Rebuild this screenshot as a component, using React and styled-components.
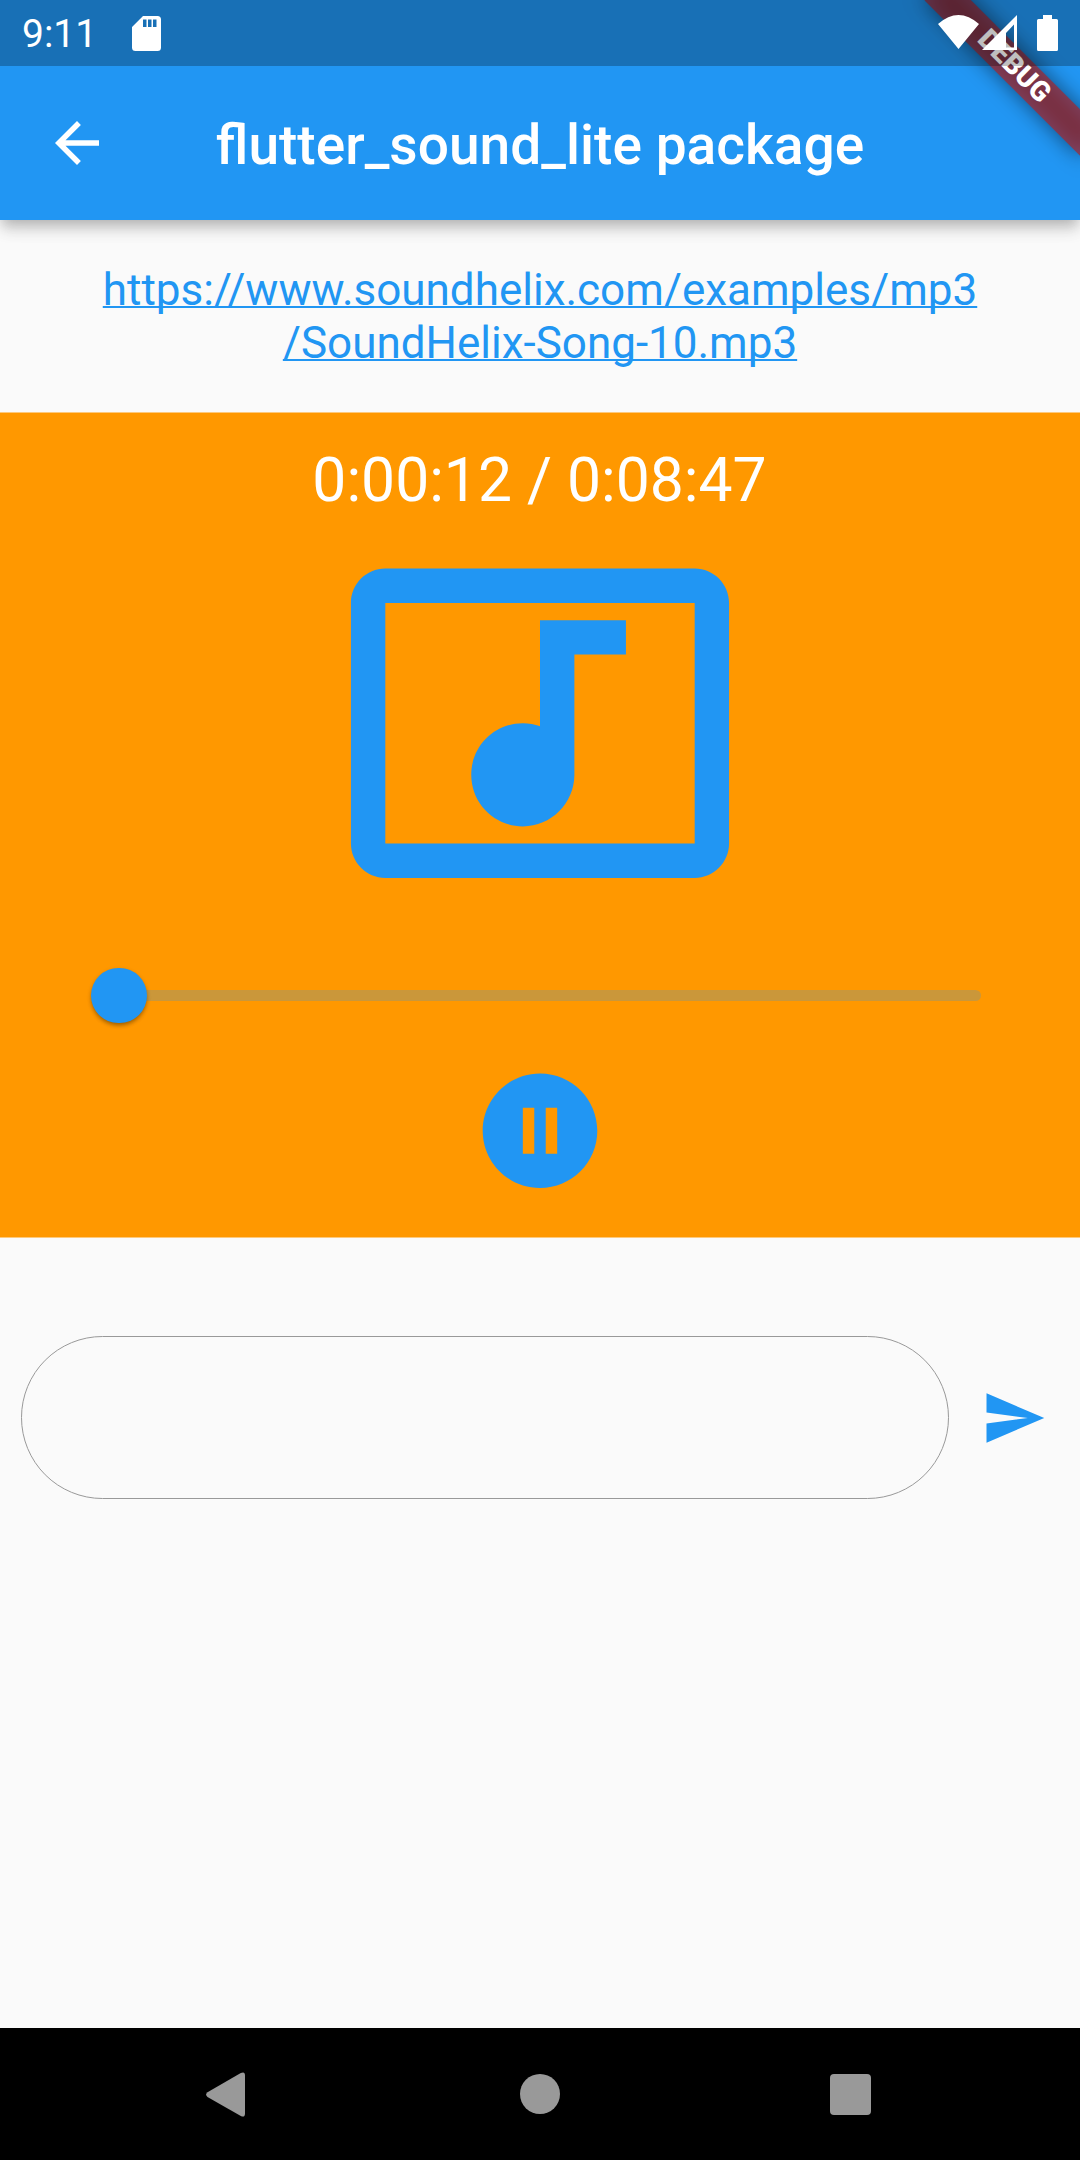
import React from "react";
import styled, { createGlobalStyle } from "styled-components";

const BLUE = "#2196f3";
const ORANGE = "#ff9800";

const GlobalStyle = createGlobalStyle`
  *, *::before, *::after { box-sizing: border-box; }
  html, body { margin: 0; padding: 0; background: #fafafa; }
  body { font-family: Roboto, "Noto Sans", sans-serif; -webkit-font-smoothing: antialiased; }
  button, input { font: inherit; border: 0; padding: 0; margin: 0; background: none; }
  svg { display: block; }
`;

const Screen = styled.div`
  position: relative;
  width: 1080px;
  height: 2160px;
  display: flex;
  flex-direction: column;
  overflow: hidden;
  background: #fafafa;
`;

const TopBar = styled.header`
  position: relative;
  z-index: 1;
  flex: none;
  height: 220px;
  padding-top: 66px;
  background: ${BLUE};
  box-shadow: 0 5.5px 11px -2.75px rgba(0, 0, 0, 0.15), 0 11px 13.75px -1px rgba(0, 0, 0, 0.13),
    0 2.75px 24px 0 rgba(0, 0, 0, 0.07);
`;

const Toolbar = styled.div`
  height: 154px;
  display: grid;
  grid-template-columns: 154px 1fr 154px;
  align-items: center;
  color: #fff;
`;

const IconButton = styled.button`
  display: flex;
  align-items: center;
  justify-content: center;
  color: ${(p) => p.$color};
`;

const Title = styled.h1`
  margin: 0;
  padding-top: 3px;
  text-align: center;
  font-size: 55.1px;
  line-height: 64px;
  font-weight: 500;
  white-space: nowrap;
`;

const LinkSection = styled.section`
  flex: none;
  height: 192px;
  padding: 44px 0;
  text-align: center;
`;

const TrackLink = styled.a`
  display: block;
  color: ${BLUE};
  font-size: 44px;
  line-height: 53px;
  text-decoration: underline;
  text-decoration-thickness: 2px;
  text-decoration-skip-ink: none;
`;

const Player = styled.section`
  flex: none;
  height: 826px;
  padding-top: 32px;
  display: flex;
  flex-direction: column;
  align-items: center;
  background: ${ORANGE};
  background-clip: padding-box;
  border: solid #fdc97d;
  border-width: 1px 0;
  color: ${BLUE};
`;

const Time = styled.div`
  height: 71.5px;
  padding-right: 1px;
  color: #fff;
  font-size: 60.6px;
  line-height: 72px;
  white-space: pre;
`;

const SliderRow = styled.div`
  width: 882px;
  height: 132.5px;
  display: flex;
  align-items: center;
`;

const Track = styled.div`
  position: relative;
  width: 100%;
  height: 11px;
  border-radius: 5.5px;
  background: rgba(33, 150, 243, 0.24);
`;

const Thumb = styled.div`
  position: absolute;
  top: -22px;
  margin-left: -28px;
  width: 55.5px;
  height: 55.5px;
  border-radius: 50%;
  background: ${BLUE};
  box-shadow: 0 3px 4px -1px rgba(0, 0, 0, 0.3), 0 2px 5px rgba(0, 0, 0, 0.14);
`;

const Composer = styled.form`
  flex: none;
  margin-top: 98px;
  padding-left: 21px;
  display: flex;
  align-items: center;
`;

const Field = styled.input`
  width: 928px;
  height: 163px;
  padding: 0 60px;
  border: 1px solid #999;
  border-radius: 82px;
  font-size: 44px;
  outline: none;
`;

const SendSlot = styled.div`
  flex: 1;
  display: flex;
  justify-content: center;
  padding-right: 1px;
`;

const NavBar = styled.nav`
  flex: none;
  height: 132px;
  margin-top: auto;
  padding: 0 73px 0 70px;
  display: grid;
  grid-template-columns: repeat(3, 1fr);
  align-items: center;
  justify-items: center;
  background: #000;
`;

const HomeButton = styled(IconButton)`
  margin-left: 3px;
`;

const DebugCorner = styled.div`
  position: absolute;
  z-index: 2;
  top: 0;
  right: 0;
  width: 260px;
  height: 260px;
  overflow: hidden;
  pointer-events: none;
`;

const Ribbon = styled.div`
  position: absolute;
  top: 49.6px;
  right: -43.9px;
  width: 220px;
  height: 33px;
  transform: rotate(45deg);
  color: #fff;
  font-size: 28px;
  line-height: 31px;
  font-weight: 900;
  text-align: center;

  &::before {
    content: "";
    position: absolute;
    inset: 0;
    background: rgba(0, 0, 0, 0.5);
    filter: blur(10.9px);
  }
`;

const RibbonLabel = styled.span`
  position: absolute;
  inset: 0;
  background: rgba(183, 28, 28, 0.627);
`;

const StatusBar = styled.div`
  position: absolute;
  z-index: 3;
  top: 0;
  left: 0;
  width: 100%;
  height: 66px;
  padding: 0 22px;
  display: flex;
  align-items: center;
  justify-content: space-between;
  background: rgba(0, 0, 0, 0.25);
  color: #fff;
`;

const StatusGroup = styled.div`
  display: flex;
  align-items: center;
  gap: ${(p) => p.$gap}px;
`;

const Clock = styled.span`
  width: 74px;
  padding-top: 2px;
  font-size: 39px;
  line-height: 46px;
  white-space: nowrap;
`;

const Icon = ({ width = 66, height = width, box = "0 0 24 24", d }) => (
  <svg width={width} height={height} viewBox={box} fill="currentColor" aria-hidden="true">
    <path d={d} />
  </svg>
);

export default function App() {
  const elapsed = 12;
  const total = 527;

  return (
    <>
      <GlobalStyle />
      <Screen>
        <StatusBar>
          <StatusGroup $gap={36}>
            <Clock>9:11</Clock>
            <Icon
              width={29}
              height={35}
              box="0 0 29 35"
              d="M11 0H25.5Q29 0 29 3.5V31.5Q29 35 25.5 35H3.5Q0 35 0 31.5V11Zm0 3.500v7.500h3.500v-7.500zm5 0v7.500h3.500v-7.500zm5 0v7.500h3.500v-7.500z"
            />
          </StatusGroup>
          <StatusGroup $gap={0}>
            <Icon
              width={120}
              height={36}
              box="0 0 120 36"
              d="M0 9Q20.500 -9 41 9L20.500 34ZM44 35L79 0V35ZM68 18V32.500H76V9.500ZM105 0h9v4h4.500q1.500 0 1.500 1.500V34.500q0 1.500-1.500 1.500h-18q-1.500 0-1.500-1.500V5.500q0-1.500 1.500-1.500H105Z"
            />
          </StatusGroup>
        </StatusBar>

        <TopBar>
          <Toolbar>
            <IconButton $color="#fff" aria-label="Back">
              <Icon d="M20 11H7.830l5.590-5.590L12 4l-8 8 8 8 1.410-1.410L7.830 13H20v-2z" />
            </IconButton>
            <Title>flutter_sound_lite package</Title>
          </Toolbar>
        </TopBar>

        <LinkSection>
          <TrackLink>
            https://www.soundhelix.com/examples/mp3
            <br />
            /SoundHelix-Song-10.mp3
          </TrackLink>
        </LinkSection>

        <Player>
          <Time>0:00:12 / 0:08:47</Time>
          <Icon
            width={414}
            height={412.5}
            d="M21 3H3c-1.100 0-2 .9-2 2v14c0 1.100.9 2 2 2h18c1.100 0 2-.9 2-2V5c0-1.100-.9-2-2-2zm0 16H3V5h18v14zM8 15c0-1.660 1.340-3 3-3 .35 0 .69.070 1 .18V6h5v2h-3v7.030c-.02 1.640-1.350 2.970-3 2.970-1.660 0-3-1.340-3-3z"
          />
          <SliderRow>
            <Track>
              <Thumb style={{ left: `${(elapsed / total) * 100}%` }} />
            </Track>
          </SliderRow>
          <IconButton $color={BLUE} type="button" aria-label="Pause">
            <Icon
              width={138}
              height={137.5}
              d="M12 2C6.480 2 2 6.480 2 12s4.480 10 10 10 10-4.480 10-10S17.520 2 12 2zm-1 14H9V8h2v8zm4 0h-2V8h2v8z"
            />
          </IconButton>
        </Player>

        <Composer>
          <Field aria-label="Track URL" />
          <SendSlot>
            <IconButton $color={BLUE} type="button" aria-label="Send">
              <Icon d="M2.010 21L23 12 2.010 3 2 10l15 2-15 2z" />
            </IconButton>
          </SendSlot>
        </Composer>

        <NavBar>
          <IconButton $color="#999" aria-label="Navigate back">
            <Icon width={40} height={45} box="0 0 40 45" d="M1.500 20.200L34.800 1Q39 -1 39 3.500V41.500Q39 46 34.800 44L1.500 25Q-1.300 22.600 1.500 20.200Z" />
          </IconButton>
          <HomeButton $color="#999" aria-label="Home">
            <Icon width={40} box="0 0 40 40" d="M20 0a20 20 0 1 0 0 40a20 20 0 1 0 0-40z" />
          </HomeButton>
          <IconButton $color="#999" aria-label="Recents">
            <Icon width={41} box="0 0 41 41" d="M4 0H37Q41 0 41 4V37Q41 41 37 41H4Q0 41 0 37V4Q0 0 4 0Z" />
          </IconButton>
        </NavBar>

        <DebugCorner>
          <Ribbon>
            <RibbonLabel>DEBUG</RibbonLabel>
          </Ribbon>
        </DebugCorner>
      </Screen>
    </>
  );
}
